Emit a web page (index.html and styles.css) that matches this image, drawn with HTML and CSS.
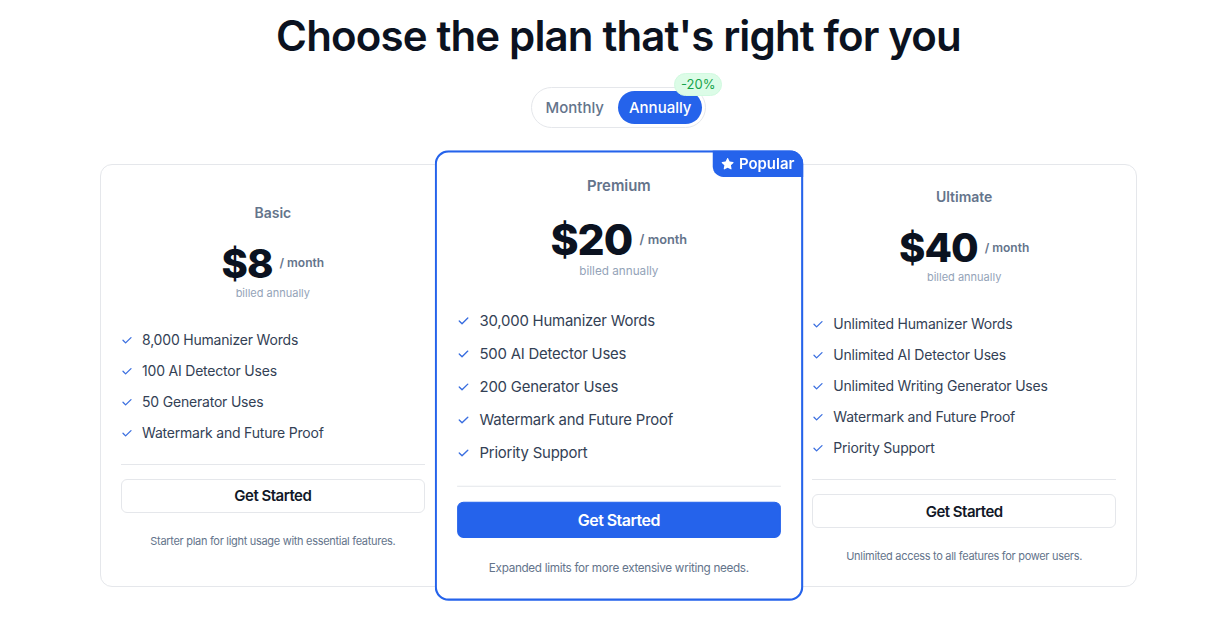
FILE: index.html
```html
<!DOCTYPE html>
<html lang="en">
<head>
<meta charset="utf-8">
<title>Pricing</title>
<link rel="stylesheet" href="styles.css">
</head>
<body>
<main class="page">
  <h1 class="title">Choose the plan that's right for you</h1>

  <div class="toggle-wrap">
    <div class="toggle">
      <button class="toggle-btn">Monthly</button>
      <button class="toggle-btn active">Annually</button>
      <span class="discount">-20%</span>
    </div>
  </div>

  <section class="plans">
    <article class="card">
      <h2 class="plan-name">Basic</h2>
      <div class="price-row"><span class="price">$8</span><span class="per">/ month</span></div>
      <p class="billed">billed annually</p>
      <ul class="features">
        <li><svg class="check" viewBox="0 0 12 12"><path d="M2 6.3l2.6 2.6L10 3.6"/></svg>8,000 Humanizer Words</li>
        <li><svg class="check" viewBox="0 0 12 12"><path d="M2 6.3l2.6 2.6L10 3.6"/></svg>100 AI Detector Uses</li>
        <li><svg class="check" viewBox="0 0 12 12"><path d="M2 6.3l2.6 2.6L10 3.6"/></svg>50 Generator Uses</li>
        <li><svg class="check" viewBox="0 0 12 12"><path d="M2 6.3l2.6 2.6L10 3.6"/></svg>Watermark and Future Proof</li>
      </ul>
      <hr class="divider">
      <button class="cta">Get Started</button>
      <p class="note">Starter plan for light usage with essential features.</p>
    </article>

    <article class="card featured">
      <span class="badge"><svg class="star" viewBox="0 0 24 24"><path d="M12 2.2c.4 0 .7.2.9.6l2.4 5 5.5.7c.8.1 1.1 1.1.5 1.7l-4 3.8 1 5.4c.2.8-.7 1.4-1.4 1l-4.9-2.6-4.9 2.6c-.7.4-1.6-.2-1.4-1l1-5.4-4-3.8c-.6-.6-.3-1.600.5-1.7l5.5-.7 2.4-5c.2-.4.5-.6.9-.6z"/></svg>Popular</span>
      <h2 class="plan-name">Premium</h2>
      <div class="price-row"><span class="price">$20</span><span class="per">/ month</span></div>
      <p class="billed">billed annually</p>
      <ul class="features">
        <li><svg class="check" viewBox="0 0 12 12"><path d="M2 6.3l2.6 2.6L10 3.6"/></svg>30,000 Humanizer Words</li>
        <li><svg class="check" viewBox="0 0 12 12"><path d="M2 6.3l2.6 2.6L10 3.6"/></svg>500 AI Detector Uses</li>
        <li><svg class="check" viewBox="0 0 12 12"><path d="M2 6.3l2.6 2.6L10 3.6"/></svg>200 Generator Uses</li>
        <li><svg class="check" viewBox="0 0 12 12"><path d="M2 6.3l2.6 2.6L10 3.6"/></svg>Watermark and Future Proof</li>
        <li><svg class="check" viewBox="0 0 12 12"><path d="M2 6.3l2.6 2.6L10 3.6"/></svg>Priority Support</li>
      </ul>
      <hr class="divider">
      <button class="cta primary">Get Started</button>
      <p class="note">Expanded limits for more extensive writing needs.</p>
    </article>

    <article class="card">
      <h2 class="plan-name">Ultimate</h2>
      <div class="price-row"><span class="price">$40</span><span class="per">/ month</span></div>
      <p class="billed">billed annually</p>
      <ul class="features">
        <li><svg class="check" viewBox="0 0 12 12"><path d="M2 6.3l2.6 2.6L10 3.6"/></svg>Unlimited Humanizer Words</li>
        <li><svg class="check" viewBox="0 0 12 12"><path d="M2 6.3l2.6 2.6L10 3.6"/></svg>Unlimited AI Detector Uses</li>
        <li><svg class="check" viewBox="0 0 12 12"><path d="M2 6.3l2.6 2.6L10 3.6"/></svg>Unlimited Writing Generator Uses</li>
        <li><svg class="check" viewBox="0 0 12 12"><path d="M2 6.3l2.6 2.6L10 3.6"/></svg>Watermark and Future Proof</li>
        <li><svg class="check" viewBox="0 0 12 12"><path d="M2 6.3l2.6 2.6L10 3.6"/></svg>Priority Support</li>
      </ul>
      <hr class="divider">
      <button class="cta">Get Started</button>
      <p class="note">Unlimited access to all features for power users.</p>
    </article>
  </section>
</main>
</body>
</html>
```

FILE: styles.css
```css
* { box-sizing: border-box; }

html, body {
  margin: 0;
  padding: 0;
  background: #ffffff;
}

body {
  font-family: Inter, "Noto Sans", "Liberation Sans", sans-serif;
  color: #0f172a;
}

.page {
  width: 1226px;
  min-height: 628px;
  padding: 10px 0 40px 11px;
  display: flex;
  flex-direction: column;
  align-items: center;
}

.title {
  margin: 0;
  font-size: 42px;
  line-height: 52px;
  font-weight: 600;
  letter-spacing: -0.85px;
  color: #0b1220;
}

.toggle-wrap {
  margin-top: 25px;
  display: flex;
  justify-content: center;
}

.toggle {
  position: relative;
  display: flex;
  gap: 3px;
  padding: 3px;
  border: 1px solid #e5e7eb;
  border-radius: 999px;
  background: #fff;
}

.toggle-btn {
  height: 33px;
  padding: 0 11px;
  border: 0;
  border-radius: 999px;
  background: transparent;
  font-family: inherit;
  font-size: 15px;
  font-weight: 500;
  color: #64748b;
}

.toggle-btn.active {
  background: #2563eb;
  color: #fff;
}

.discount {
  position: absolute;
  top: -15px;
  right: -17px;
  height: 23px;
  padding: 0 6px;
  line-height: 21px;
  border: 1px solid #d1fae0;
  border-radius: 999px;
  background: #dcfce7;
  color: #16a34a;
  font-size: 13px;
  font-weight: 400;
}

.plans {
  margin-top: 36px;
  width: 1037px;
  display: grid;
  grid-template-columns: repeat(3, 1fr);
}

.card {
  position: relative;
  display: flex;
  flex-direction: column;
  justify-content: center;
  padding: 22px 20px 22px;
  border: 1px solid #e5e7eb;
  border-radius: 12px;
  background: #fff;
}

.card.featured {
  z-index: 2;
  border: 2px solid #2563eb;
  border-radius: 13px;
  transform: scale(1.065);
  padding: 21px 19px 21px;
}

.badge {
  position: absolute;
  top: -2px;
  right: -2px;
  height: 25px;
  padding: 0 8px 0 7px;
  display: flex;
  align-items: center;
  gap: 4px;
  background: #2563eb;
  color: #fff;
  font-size: 14px;
  font-weight: 600;
  border-radius: 0 13px 0 10px;
}

.star {
  width: 14px;
  height: 14px;
  fill: #fff;
}

.plan-name {
  margin: 0;
  text-align: center;
  font-size: 14px;
  line-height: 20px;
  font-weight: 600;
  color: #64748b;
}

.price-row {
  margin-top: 21px;
  display: flex;
  justify-content: center;
  align-items: center;
  gap: 7px;
  height: 40px;
}

.price {
  font-size: 40px;
  line-height: 40px;
  font-weight: 800;
  letter-spacing: -1px;
  color: #0b1220;
}

.per {
  font-size: 12px;
  font-weight: 600;
  color: #64748b;
  margin-top: -2px;
}

.billed {
  margin: 1px 0 0;
  text-align: center;
  font-size: 11px;
  line-height: 16px;
  color: #94a3b8;
}

.features {
  list-style: none;
  margin: 29px 0 0;
  padding: 0;
  display: flex;
  flex-direction: column;
  gap: 11px;
}

.features li {
  display: flex;
  align-items: center;
  font-size: 14px;
  line-height: 20px;
  letter-spacing: -0.2px;
  color: #334155;
}

.check {
  width: 12px;
  height: 12px;
  margin: 0 9px 0 0;
  fill: none;
  stroke: #3b6fe0;
  stroke-width: 1.3;
  stroke-linecap: round;
  stroke-linejoin: round;
}

.divider {
  margin: 21px 0 0;
  border: 0;
  border-top: 1px solid #e5e7eb;
}

.cta {
  margin-top: 14px;
  height: 34px;
  width: 100%;
  border: 1px solid #e5e7eb;
  border-radius: 6px;
  background: #fff;
  font-family: inherit;
  font-size: 15px;
  font-weight: 600;
  letter-spacing: -0.5px;
  color: #111827;
}

.cta.primary {
  background: #2563eb;
  border-color: #2563eb;
  color: #fff;
}

.note {
  margin: 20px 0 0;
  text-align: center;
  font-size: 11px;
  line-height: 16px;
  letter-spacing: -0.3px;
  color: #64748b;
}
```
